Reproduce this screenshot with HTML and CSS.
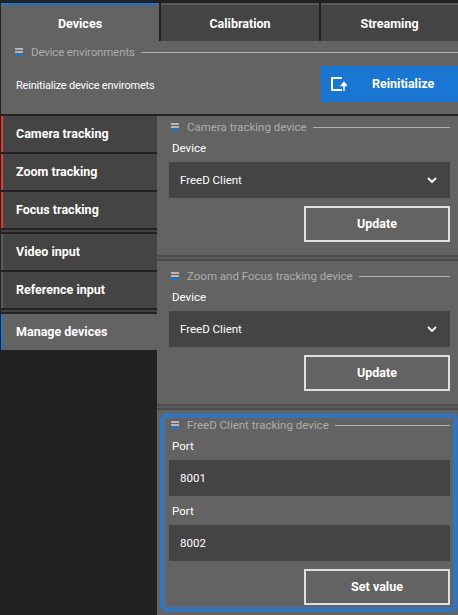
FILE: index.html
```html
<!doctype html>
<html lang="en">
<head>
  <meta charset="utf-8">
  <title>Devices</title>
  <link rel="stylesheet" href="styles.css">
</head>
<body>
  <div class="tabs">
    <div class="tab tab-active">Devices</div>
    <div class="tab">Calibration</div>
    <div class="tab tab-last">Streaming</div>
  </div>

  <section class="env">
    <div class="group-title">
      <svg class="grip" width="8" height="8" viewBox="0 0 8 8"><rect width="8" height="2" fill="#b5b5b5"/><rect y="3" width="8" height="2" fill="#b5b5b5"/><rect y="6" width="8" height="2" fill="#1976d2"/></svg>
      <span class="group-name">Device environments</span>
      <span class="group-line"></span>
    </div>
    <div class="env-row">
      <span class="env-text">Reinitialize device enviromets</span>
      <button class="reinit">
        <svg class="reinit-icon" width="16" height="15" viewBox="0 0 16 15">
          <path d="M11 1H1V13H11" fill="none" stroke="#fff" stroke-width="2"/>
          <path d="M13 14V8M10.5 8.5L13 5.5L15.5 8.5Z" fill="#fff" stroke="#fff" stroke-width="1.5"/>
        </svg>
        <span class="reinit-label">Reinitialize</span>
      </button>
    </div>
  </section>

  <div class="main">
    <nav class="nav">
      <div class="nav-item nav-red">Camera tracking</div>
      <div class="nav-item nav-red">Zoom tracking</div>
      <div class="nav-item nav-red nav-end">Focus tracking</div>
      <div class="nav-item nav-gray">Video input</div>
      <div class="nav-item nav-gray nav-end">Reference input</div>
      <div class="nav-item nav-active">Manage devices</div>
    </nav>

    <div class="content">
      <section class="panel panel-first">
        <div class="group-title">
          <svg class="grip" width="8" height="8" viewBox="0 0 8 8"><rect width="8" height="2" fill="#b5b5b5"/><rect y="3" width="8" height="2" fill="#b5b5b5"/><rect y="6" width="8" height="2" fill="#1976d2"/></svg>
          <span class="group-name">Camera tracking device</span>
          <span class="group-line"></span>
        </div>
        <div class="field-label">Device</div>
        <div class="field">FreeD Client
          <svg class="chevron" width="10" height="6" viewBox="0 0 10 6"><path d="M1 1L5 5L9 1" fill="none" stroke="#fff" stroke-width="1.8"/></svg>
        </div>
        <div class="actions"><button class="outline">Update</button></div>
      </section>

      <div class="divider"></div>

      <section class="panel">
        <div class="group-title">
          <svg class="grip" width="8" height="8" viewBox="0 0 8 8"><rect width="8" height="2" fill="#b5b5b5"/><rect y="3" width="8" height="2" fill="#b5b5b5"/><rect y="6" width="8" height="2" fill="#1976d2"/></svg>
          <span class="group-name">Zoom and Focus tracking device</span>
          <span class="group-line"></span>
        </div>
        <div class="field-label">Device</div>
        <div class="field">FreeD Client
          <svg class="chevron" width="10" height="6" viewBox="0 0 10 6"><path d="M1 1L5 5L9 1" fill="none" stroke="#fff" stroke-width="1.8"/></svg>
        </div>
        <div class="actions"><button class="outline">Update</button></div>
      </section>

      <div class="divider"></div>

      <section class="highlight">
        <div class="group-title">
          <svg class="grip" width="8" height="8" viewBox="0 0 8 8"><rect width="8" height="2" fill="#b5b5b5"/><rect y="3" width="8" height="2" fill="#b5b5b5"/><rect y="6" width="8" height="2" fill="#1976d2"/></svg>
          <span class="group-name">FreeD Client tracking device</span>
          <span class="group-line"></span>
        </div>
        <div class="field-label">Port</div>
        <div class="field">8001</div>
        <div class="field-label field-label-next">Port</div>
        <div class="field">8002</div>
        <div class="actions"><button class="outline">Set value</button></div>
      </section>
    </div>
  </div>
</body>
</html>
```

FILE: styles.css
```css
html, body {
  margin: 0;
  height: 615px;
  overflow: hidden;
}
body {
  background-color: #222;
  padding: 3px 0 0 1px;
  box-sizing: border-box;
  font-family: Roboto, sans-serif;
  font-size: 11.5px;
  color: #fff;
}
.tabs {
  display: flex;
  gap: 2px;
  height: 38px;
}
.tab {
  width: 158px;
  box-sizing: border-box;
  border-top: 2px solid #5a5a5a;
  background-color: #444;
  font-weight: 700;
  font-size: 12.5px;
  display: flex;
  align-items: center;
  justify-content: center;
}
.tab-active {
  background-color: #636363;
  border-top-color: #1976d2;
}
.tab-last {
  width: 137px;
}
.env {
  background-color: #636363;
  height: 73px;
  margin-bottom: 2px;
  padding-top: 3px;
  box-sizing: border-box;
}
.group-title {
  display: flex;
  align-items: center;
  height: 16px;
  margin-bottom: 5px;
  color: #adadad;
}
.env .group-title {
  padding-left: 14px;
  margin-bottom: 0;
  letter-spacing: -0.15px;
}
.grip {
  flex: none;
  margin-right: 8px;
}
.group-line {
  flex: 1;
  height: 1px;
  background-color: #b0b0b0;
  margin-left: 6px;
}
.env-row {
  display: flex;
  justify-content: space-between;
  align-items: center;
  margin-top: 6px;
  padding-left: 15px;
}
.env-text {
  font-size: 11px;
  letter-spacing: -0.2px;
  padding-top: 2px;
}
.reinit {
  display: flex;
  align-items: center;
  width: 137px;
  height: 36px;
  padding: 0 0 0 10px;
  border: none;
  background-color: #1976d2;
  color: #fff;
  font: 700 12.5px Roboto, sans-serif;
}
.reinit-label {
  margin-left: 25px;
  padding-bottom: 2px;
}
.main {
  display: flex;
}
.nav {
  width: 156px;
  flex: none;
}
.nav-item {
  height: 36px;
  margin-bottom: 2px;
  box-sizing: border-box;
  padding: 0 0 2px 13px;
  display: flex;
  align-items: center;
  background-color: #444;
  font-weight: 700;
  font-size: 12.5px;
  border-left: 2px solid #5a5a5a;
}
.nav-red {
  border-left-color: #e53935;
}
.nav-end {
  margin-bottom: 6px;
  box-shadow: 0 2px 0 0 #222, 0 4px 0 0 #404040;
}
.nav-active {
  background-color: #636363;
  border-left-color: #1976d2;
}
.content {
  width: 301px;
  flex: none;
  background-color: #636363;
  height: 499px;
}
.panel {
  padding: 7px 8px 13px 12px;
}
.panel-first {
  padding-top: 3px;
}
.panel .group-title {
  padding-left: 2px;
}
.field-label {
  height: 16px;
  line-height: 16px;
  margin-bottom: 6px;
  padding-left: 3px;
}
.field-label-next {
  margin-top: 7px;
}
.field {
  height: 36px;
  background-color: #444;
  display: flex;
  align-items: center;
  justify-content: space-between;
  padding: 0 13px 0 11px;
}
.chevron {
  flex: none;
}
.actions {
  display: flex;
  justify-content: flex-end;
  margin-top: 8px;
}
.outline {
  width: 146px;
  height: 36px;
  padding: 0 0 2px;
  border: 2px solid #e0e0e0;
  background-color: transparent;
  color: #fff;
  font: 700 12.5px Roboto, sans-serif;
}
.divider {
  height: 6px;
  box-sizing: border-box;
  background-color: #5a5a5a;
  border-top: 2px solid #4c4c4c;
  border-bottom: 2px solid #4c4c4c;
}
.highlight {
  margin: 3px 0 0 3px;
  border: 5px solid #3574b8;
  border-radius: 7px;
  padding: 0 3px 0 4px;
  height: 199px;
  box-sizing: border-box;
}
.highlight .group-title {
  height: 14px;
  margin-bottom: 6px;
  padding-left: 2px;
}
```
